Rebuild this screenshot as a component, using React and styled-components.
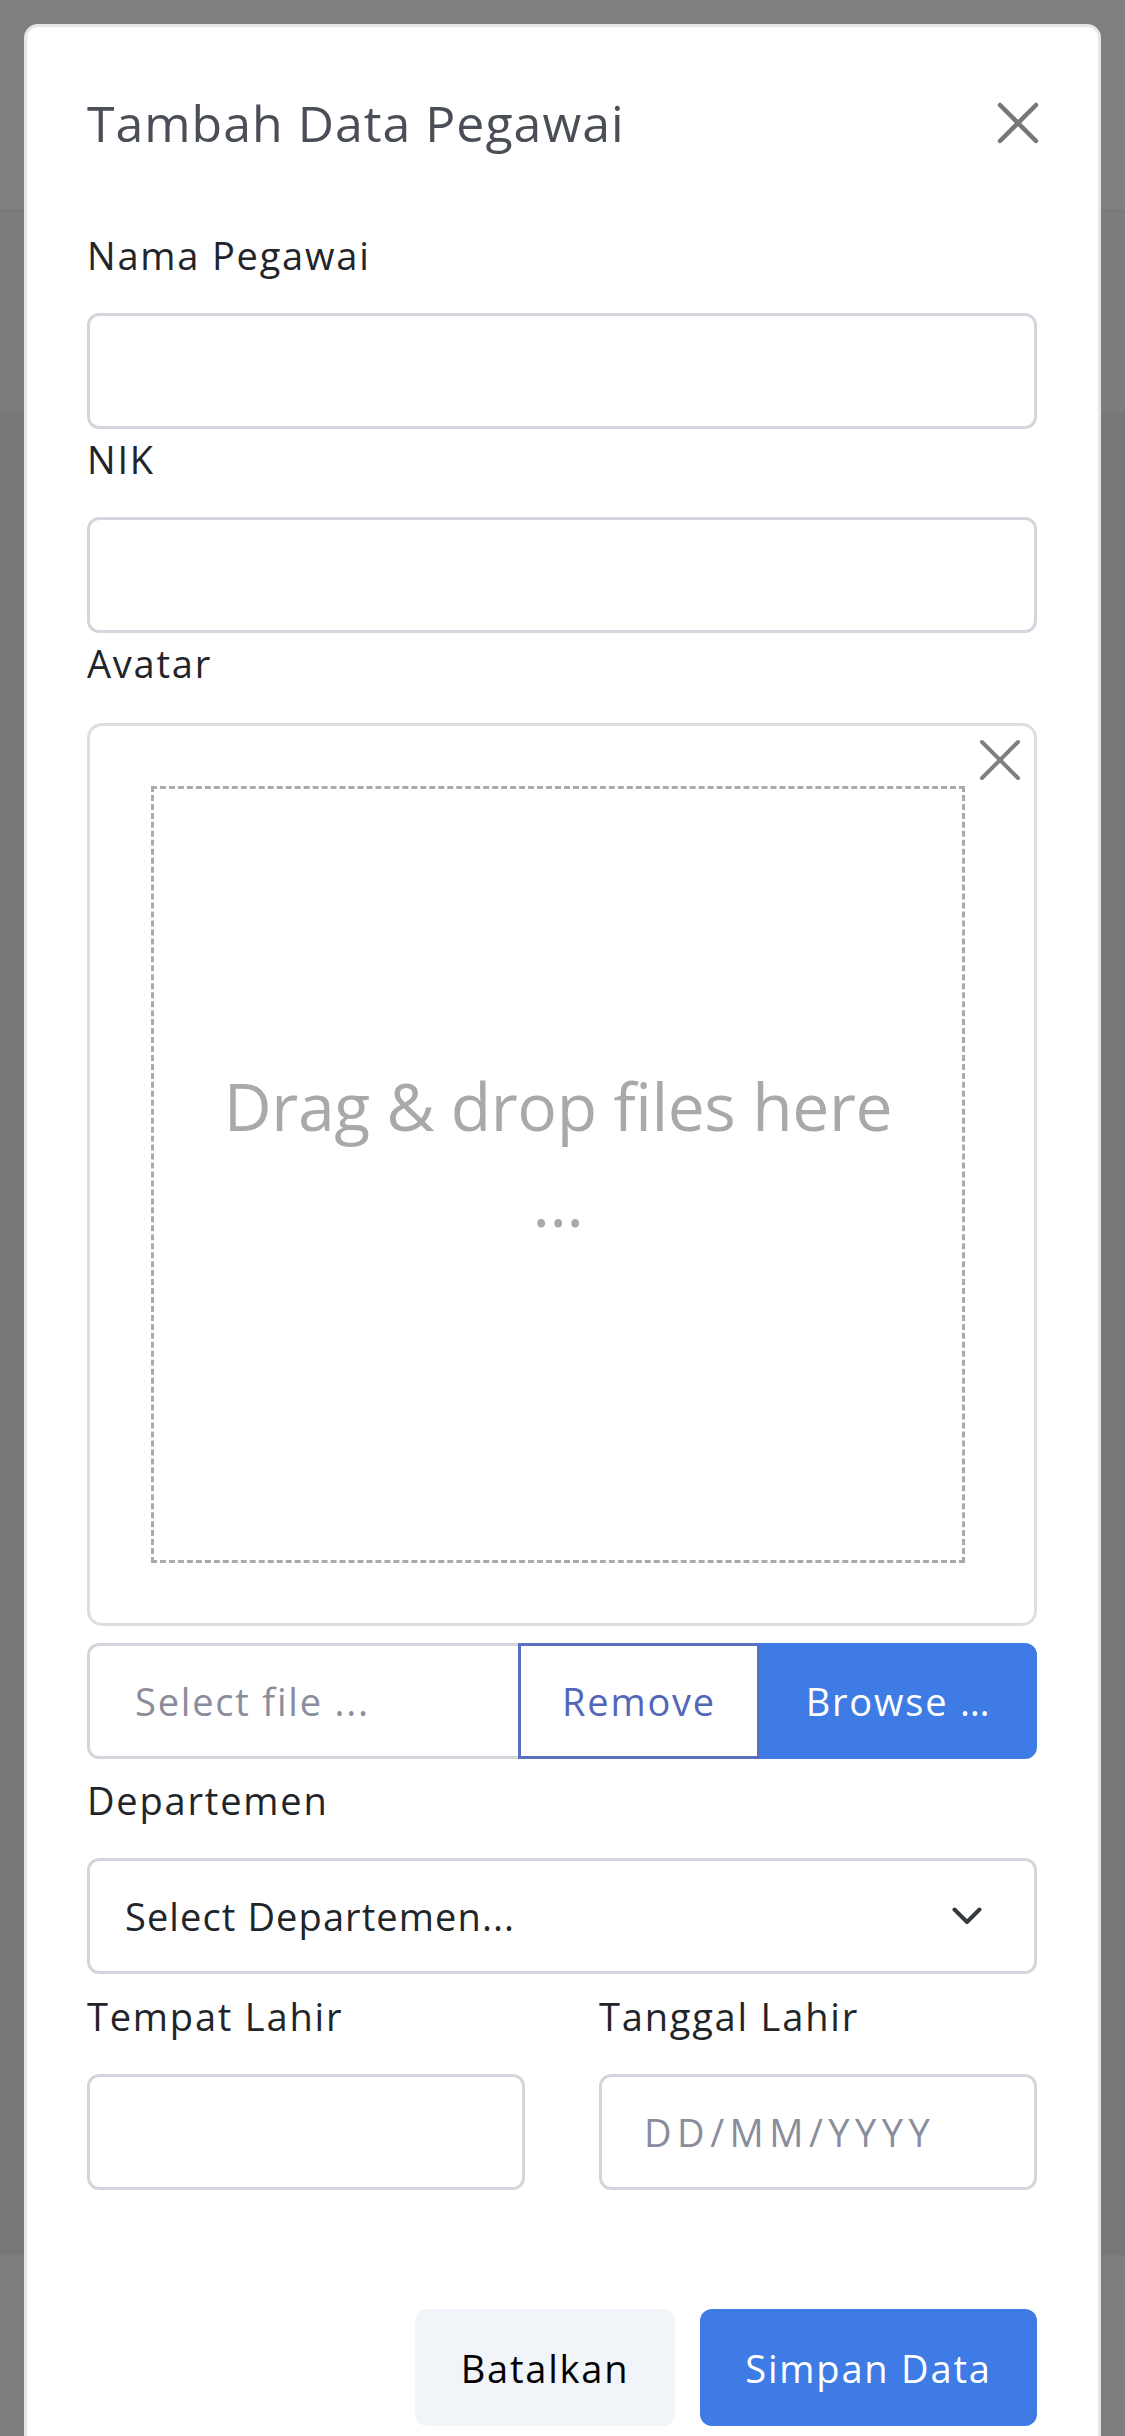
import React from "react";
import styled, { createGlobalStyle } from "styled-components";

const Global = createGlobalStyle`
  html, body { margin: 0; padding: 0; background: #7f7f7f; }
  body { font-family: "Open Sans", "Lato", sans-serif; }
  * { box-sizing: border-box; }
`;

const Screen = styled.div`
  position: relative;
  width: 1125px;
  height: 2436px;
  overflow: hidden;
`;

const Backdrop = styled.div`
  display: flex;
  flex-direction: column;
  height: 100%;
`;

const BgBand = styled.div`
  height: ${(p) => p.$h}px;
  flex: ${(p) => (p.$grow ? 1 : "none")};
  background: ${(p) => p.$bg};
  border-bottom: ${(p) => (p.$line ? "2px solid #787878" : "none")};
`;

const Modal = styled.div`
  position: absolute;
  top: 24px;
  left: 24px;
  width: 1077px;
  background: #fff;
  border: 3px solid #e6e6e8;
  border-radius: 14px;
`;

const ModalHeader = styled.div`
  display: flex;
  align-items: center;
  justify-content: space-between;
  padding: 66px 58px 0 60px;
`;

const Title = styled.h5`
  margin: 0;
  font-size: 50px;
  line-height: 60px;
  font-weight: 400;
  letter-spacing: 1px;
  color: #4a4f57;
`;

const CloseButton = styled.button`
  width: 44px;
  height: 44px;
  padding: 0;
  border: 0;
  background: transparent;
  display: flex;
  align-items: center;
  justify-content: center;
`;

const ModalBody = styled.div`
  padding: 74px 61px 0 60px;
  display: flex;
  flex-direction: column;
  letter-spacing: 1.8px;
`;

const Field = styled.div`
  display: flex;
  flex-direction: column;
  margin-bottom: ${(p) => p.$mb ?? 2}px;
  min-width: 0;
`;

const Label = styled.label`
  font-size: 38px;
  line-height: 57px;
  color: #212529;
  margin-bottom: ${(p) => p.$mb ?? 29}px;
`;

const TextInput = styled.div`
  height: 116px;
  border: 3px solid #d3d7dd;
  border-radius: 12px;
  background: #fff;
  display: flex;
  align-items: center;
  padding: 0 42px;
  font-size: 38px;
  letter-spacing: ${(p) => p.$spacing ?? 1.8}px;
  color: ${(p) => (p.$placeholder ? "#8a8d9b" : "#212529")};
`;

const UploadBox = styled.div`
  position: relative;
  height: 903px;
  border: 3px solid #dedede;
  border-radius: 15px;
  padding: 60px 69px 60px 61px;
  display: flex;
`;

const DropZone = styled.div`
  flex: 1;
  border: 3px dashed #aaaaaa;
  display: flex;
  align-items: center;
  justify-content: center;
  text-align: center;
  padding: 0 40px 44px;
`;

const DropTitle = styled.div`
  font-size: 66px;
  line-height: 96px;
  letter-spacing: -0.4px;
  color: #a9a9a9;
`;

const RemovePreview = styled.button`
  position: absolute;
  top: 12px;
  right: 12px;
  width: 44px;
  height: 44px;
  padding: 0;
  border: 0;
  background: transparent;
  display: flex;
  align-items: center;
  justify-content: center;
`;

const InputGroup = styled.div`
  display: flex;
  height: 116px;
  margin-top: 17px;
`;

const Caption = styled.div`
  flex: 1;
  border: 3px solid #d3d7dd;
  border-right: 0;
  border-radius: 12px 0 0 12px;
  display: flex;
  align-items: center;
  padding-left: 45px;
  font-size: 38px;
  color: #8a8d9b;
`;

const GroupButton = styled.button`
  font-family: inherit;
  font-size: 38px;
  letter-spacing: 1.8px;
  height: 100%;
  width: ${(p) => p.$w}px;
  border: 3px solid ${(p) => (p.$primary ? "#3e7be4" : "#5a6fc0")};
  background: ${(p) => (p.$primary ? "#3e7be4" : "#fff")};
  color: ${(p) => (p.$primary ? "#fff" : "#5367b8")};
  border-radius: ${(p) => (p.$primary ? "0 12px 12px 0" : "0")};
  padding: 0;
`;

const Select = styled.div`
  height: 116px;
  border: 3px solid #d3d7dd;
  border-radius: 12px;
  display: flex;
  align-items: center;
  justify-content: space-between;
  padding: 0 52px 0 35px;
  font-size: 38px;
  letter-spacing: 1.1px;
  color: #212529;
`;

const Row = styled.div`
  display: grid;
  grid-template-columns: 1fr 1fr;
  column-gap: 74px;
`;

const ModalFooter = styled.div`
  display: flex;
  justify-content: flex-end;
  gap: 25px;
  padding: 119px 61px 60px 60px;
`;

const FooterButton = styled.button`
  font-family: inherit;
  font-size: 38px;
  letter-spacing: 1.8px;
  height: 117px;
  width: ${(p) => p.$w}px;
  border: 0;
  border-radius: 12px;
  background: ${(p) => (p.$primary ? "#3e7be4" : "#f1f4f8")};
  color: ${(p) => (p.$primary ? "#fff" : "#000")};
`;

const XIcon = ({ size = 42, color = "#777", stroke = 4.5 }) => (
  <svg width={size} height={size} viewBox="0 0 42 42" fill="none">
    <path
      d="M3 3 L39 39 M39 3 L3 39"
      stroke={color}
      strokeWidth={stroke}
      strokeLinecap="round"
    />
  </svg>
);

const Chevron = () => (
  <svg width="30" height="18" viewBox="0 0 30 18" fill="none">
    <path
      d="M2.5 2.5 L15 15 L27.5 2.5"
      stroke="#343a40"
      strokeWidth="4"
      strokeLinecap="round"
      strokeLinejoin="round"
    />
  </svg>
);

export default function App() {
  return (
    <>
      <Global />
      <Screen>
        <Backdrop>
          <BgBand $h={212} $bg="#7f7f7f" $line />
          <BgBand $h={201} $bg="#7c7c7c" />
          <BgBand $grow $bg="#77777a" />
          <BgBand $h={181} $bg="#7d7d7d" />
        </Backdrop>
        <Modal>
          <ModalHeader>
            <Title>Tambah Data Pegawai</Title>
            <CloseButton aria-label="Close">
              <XIcon />
            </CloseButton>
          </ModalHeader>
          <ModalBody>
            <Field>
              <Label>Nama Pegawai</Label>
              <TextInput />
            </Field>
            <Field>
              <Label>NIK</Label>
              <TextInput />
            </Field>
            <Field $mb={13}>
              <Label $mb={31}>Avatar</Label>
              <UploadBox>
                <RemovePreview aria-label="Remove">
                  <XIcon color="#808080" stroke={4} />
                </RemovePreview>
                <DropZone>
                  <DropTitle>
                    Drag &amp; drop files here
                    <br />…
                  </DropTitle>
                </DropZone>
              </UploadBox>
              <InputGroup>
                <Caption>Select file ...</Caption>
                <GroupButton $w={242}>Remove</GroupButton>
                <GroupButton $w={277} $primary>
                  Browse …
                </GroupButton>
              </InputGroup>
            </Field>
            <Field $mb={14}>
              <Label>Departemen</Label>
              <Select>
                <span>Select Departemen...</span>
                <Chevron />
              </Select>
            </Field>
            <Row>
              <Field $mb={0}>
                <Label>Tempat Lahir</Label>
                <TextInput />
              </Field>
              <Field $mb={0}>
                <Label>Tanggal Lahir</Label>
                <TextInput $placeholder $spacing={5.5}>
                  DD/MM/YYYY
                </TextInput>
              </Field>
            </Row>
          </ModalBody>
          <ModalFooter>
            <FooterButton $w={260}>Batalkan</FooterButton>
            <FooterButton $w={337} $primary>
              Simpan Data
            </FooterButton>
          </ModalFooter>
        </Modal>
      </Screen>
    </>
  );
}
